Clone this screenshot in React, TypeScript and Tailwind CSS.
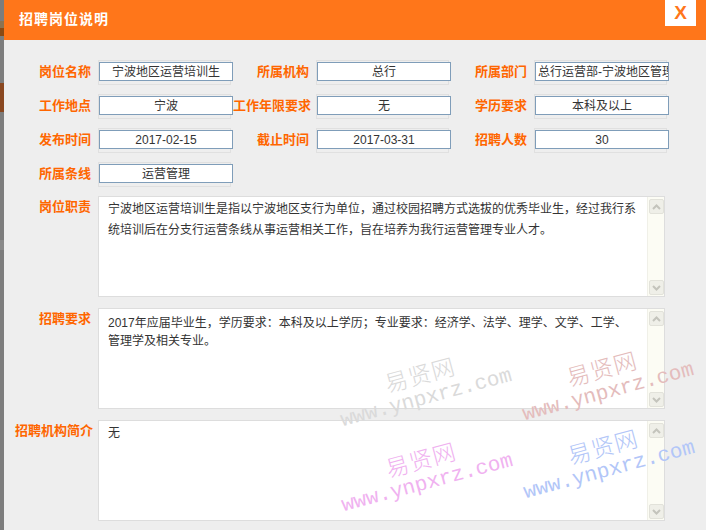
import React from "react";

// ---------------------------------------------------------------------------
// Shared class strings
// ---------------------------------------------------------------------------
const CJK = "font-['Liberation_Sans','Noto_Sans_CJK_SC',sans-serif]";
const labelCls =
  "w-[76px] shrink-0 text-right text-[13px] leading-[17px] font-bold text-[#ff6600] whitespace-nowrap";

interface FieldProps {
  label: string;
  value: string;
  left?: boolean;
}

function Field({ label, value, left }: FieldProps) {
  return (
    <div className="flex w-[218px] items-center gap-[7px]">
      <div className={labelCls + " -mt-[2px]"}>{label}</div>
      <div className="h-[25px] w-[133px] border border-[#e0e0e0] pt-px">
        <div
          className={
            "flex h-[19px] w-[134px] items-center overflow-hidden whitespace-nowrap border border-[#7f9db9] bg-white px-[2px] text-[12px] text-[#333] " +
            (left ? "justify-start" : "justify-center")
          }
        >
          {value}
        </div>
      </div>
    </div>
  );
}

function Chevron({ up }: { up?: boolean }) {
  return (
    <svg width="9" height="6" viewBox="0 0 9 6">
      <polyline
        points={up ? "1,5 4.5,1.5 8,5" : "1,1 4.5,4.5 8,1"}
        fill="none"
        stroke="#c4c4bc"
        strokeWidth="2"
      />
    </svg>
  );
}

function ScrollBar() {
  return (
    <div className="flex w-[17px] shrink-0 flex-col items-center justify-between border-l border-[#f0f0e8] bg-[#fcfcf4] pt-[2px] pb-[1px]">
      <div className="flex h-[15px] w-[15px] items-center justify-center rounded-[2px] border border-[#e2e2da] bg-[#efefe8]">
        <Chevron up />
      </div>
      <div className="flex h-[15px] w-[15px] items-center justify-center rounded-[2px] border border-[#e2e2da] bg-[#efefe8]">
        <Chevron />
      </div>
    </div>
  );
}

interface AreaProps {
  label: string;
  lines: string[];
  textCls: string;
  padCls: string;
}

function Area({ label, lines, textCls, padCls }: AreaProps) {
  return (
    <div className="flex gap-[7px]">
      <div className={labelCls + " pt-[2px]"}>{label}</div>
      <div className="flex h-[101px] w-[567px] border border-[#dddddd] bg-white">
        <div className={"flex-1 pl-[9px] text-[#333] " + padCls + " " + textCls}>
          {lines.map((l) => (
            <div key={l} className="whitespace-nowrap">
              {l}
            </div>
          ))}
        </div>
        <ScrollBar />
      </div>
    </div>
  );
}

// watermark group, placed by its centre on the page
function Mark({ cls, color }: { cls: string; color: string }) {
  return (
    <div
      className={
        "pointer-events-none absolute flex -translate-x-1/2 -translate-y-1/2 -rotate-[15deg] flex-col items-center " +
        cls +
        " " +
        color
      }
    >
      <div className="text-[23px] leading-[26px] font-['Noto_Sans_CJK_SC',serif] font-light tracking-[1px]">
        易贤网
      </div>
      <div className="text-[21px] leading-[26px] font-['Liberation_Mono',monospace] whitespace-nowrap">
        www.ynpxrz.com
      </div>
    </div>
  );
}

export default function App() {
  return (
    <div className={"relative flex h-[530px] w-[706px] overflow-hidden " + CJK}>
      {/* left edge strip of the page behind the dialog */}
      <div className="flex w-[4px] shrink-0 flex-col bg-[#7d7d7d]">
        <div className="h-[21px]" />
        <div className="h-[7px] bg-[#8c7352]" />
        <div className="h-[8px] bg-[#8a4a14]" />
        <div className="h-[47px]" />
        <div className="h-[29px] bg-[#8a4820]" />
        <div className="h-[128px]" />
        <div className="h-[10px] bg-[#8a8a8a]" />
      </div>

      <div className="flex flex-1 flex-col bg-[#eeeeee]">
        {/* Header */}
        <div className="flex h-[40px] shrink-0 bg-[#ff761a]">
          <div className="self-center pl-[15px] -mt-[1px] text-[14px] font-bold tracking-[1px] text-white">
            招聘岗位说明
          </div>
          <div className="ml-auto mr-[10px] flex h-[26px] w-[31px] items-center justify-center bg-white font-['Liberation_Sans',sans-serif] text-[19px] font-bold text-[#ff761a]">
            X
          </div>
        </div>

        {/* Short fields */}
        <div className="flex flex-col gap-[9px] pl-[11px] pt-[20px]">
          <div className="flex">
            <Field label="岗位名称" value="宁波地区运营培训生" />
            <Field label="所属机构" value="总行" />
            <Field label="所属部门" value="总行运营部-宁波地区管理" left />
          </div>
          <div className="flex">
            <Field label="工作地点" value="宁波" />
            <Field label="工作年限要求" value="无" />
            <Field label="学历要求" value="本科及以上" />
          </div>
          <div className="flex">
            <Field label="发布时间" value="2017-02-15" />
            <Field label="截止时间" value="2017-03-31" />
            <Field label="招聘人数" value="30" />
          </div>
          <div className="flex">
            <Field label="所属条线" value="运营管理" />
          </div>
        </div>

        {/* Long fields */}
        <div className="flex flex-col gap-[11px] pl-[11px] pt-[9px]">
          <Area
            label="岗位职责"
            padCls="pt-[2px]"
            textCls="text-[12px] leading-[20.5px]"
            lines={[
              "宁波地区运营培训生是指以宁波地区支行为单位，通过校园招聘方式选拔的优秀毕业生，经过我行系",
              "统培训后在分支行运营条线从事运营相关工作，旨在培养为我行运营管理专业人才。",
            ]}
          />
          <Area
            label="招聘要求"
            padCls="pt-[6px]"
            textCls="text-[12px] leading-[17.5px]"
            lines={[
              "2017年应届毕业生，学历要求：本科及以上学历；专业要求：经济学、法学、理学、文学、工学、",
              "管理学及相关专业。",
            ]}
          />
          <Area label="招聘机构简介" padCls="pt-[3px]" textCls="text-[12px] leading-[18px]" lines={["无"]} />
        </div>
      </div>

      {/* Watermarks */}
      <Mark cls="left-[423px] top-[386px]" color="text-[#dadada]" />
      <Mark cls="left-[605px] top-[380px]" color="text-[#e4bcbc]" />
      <Mark cls="left-[424px] top-[471px]" color="text-[#f0b2f0]" />
      <Mark cls="left-[606px] top-[458px]" color="text-[#b2c6f8]" />
    </div>
  );
}
